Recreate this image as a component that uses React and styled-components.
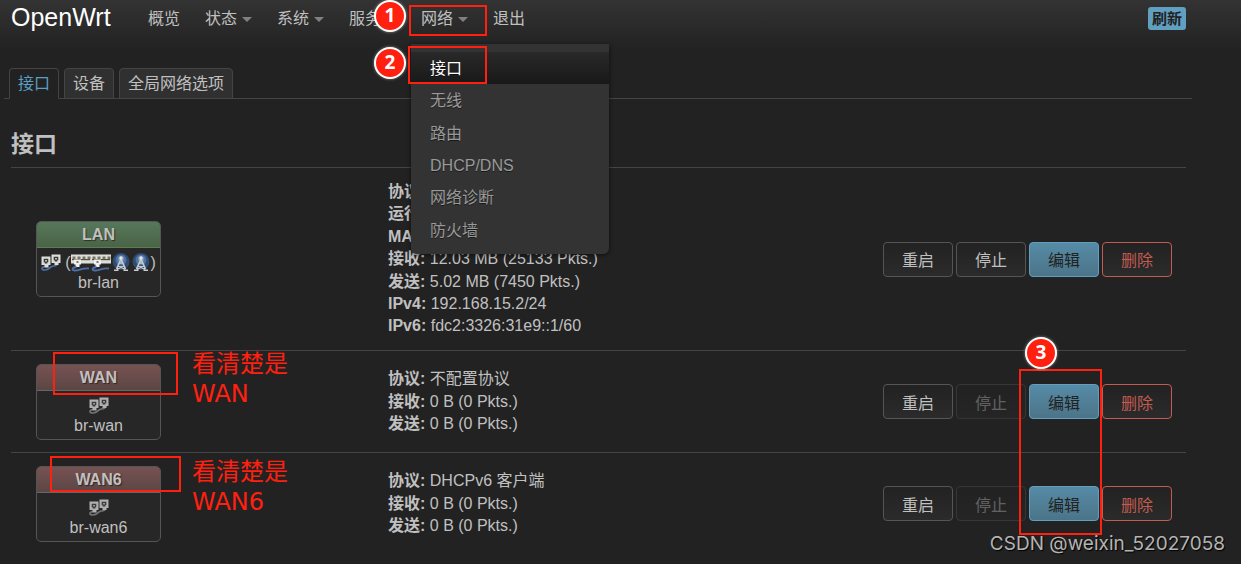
import styled, { createGlobalStyle } from 'styled-components';

const menuItems = ['接口', '无线', '路由', 'DHCP/DNS', '网络诊断', '防火墙'];

const interfaces = [
  {
    name: 'LAN',
    device: 'br-lan',
    up: true,
    details: [
      ['协议', ''],
      ['运行', ''],
      ['MAC', ''],
      ['接收', '12.03 MB (25133 Pkts.)'],
      ['发送', '5.02 MB (7450 Pkts.)'],
      ['IPv4', '192.168.15.2/24'],
      ['IPv6', 'fdc2:3326:31e9::1/60'],
    ],
  },
  {
    name: 'WAN',
    device: 'br-wan',
    details: [
      ['协议', '不配置协议'],
      ['接收', '0 B (0 Pkts.)'],
      ['发送', '0 B (0 Pkts.)'],
    ],
  },
  {
    name: 'WAN6',
    device: 'br-wan6',
    details: [
      ['协议', 'DHCPv6 客户端'],
      ['接收', '0 B (0 Pkts.)'],
      ['发送', '0 B (0 Pkts.)'],
    ],
  },
];

function BridgeIcon({ off }) {
  const plug = off ? '#b0b0b0' : '#deded8';
  const cable = off ? '#747474' : '#4a70a8';
  return (
    <svg width="20" height="20" viewBox="0 0 20 20" aria-hidden="true">
      <path d="M4 13.5C0 14 0 17 4 17C9 17 9 13 12.5 13C15.5 13 16.5 11.5 16.5 9" fill="none" stroke={cable} strokeWidth="1.7" />
      <path d="M.5 3.5h9v8.5h-2v2.5h-4V12h-3z" fill={plug} />
      <path d="M2.7 5.7h4.6v3.6h-1v1.2H3.7V9.3h-1z" fill="#3b3b3b" />
      <path d="M4.2 7h1.6v1.6H4.2z" fill={plug} />
      <path d="M10.5 1.5h9V10h-2v2h-4v-2h-3z" fill={plug} />
      <path d="M12.7 3.7h4.6v3.6h-1v1.2h-2.6V7.3h-1z" fill="#3b3b3b" />
      <path d="M14.2 5h1.6v1.6h-1.6z" fill={plug} />
    </svg>
  );
}

function SwitchIcon() {
  return (
    <svg width="20" height="20" viewBox="0 0 20 20" aria-hidden="true">
      <path d="M0 1.5h20v9H0z" fill="#deded8" />
      <path d="M1.5 3.5h3v3h-3zM6.5 3.5h3v3h-3zM11.5 3.5h3v3h-3zM16.5 3.5h3v3h-3z" fill="#77756a" />
      <path d="M1 6h18v1.2H1z" fill="#55533c" />
      <path d="M3 6.5h7v5H8.5V14h-4v-2.5H3z" fill="#efefeb" />
      <path d="M5.5 8h2v2h-2z" fill="#777" />
      <path d="M5.5 14C1 14.5 0 17.5 4 17.5C9 17.5 10 15 18 15.5" fill="none" stroke="#4a70a8" strokeWidth="1.8" />
    </svg>
  );
}

function WifiIcon() {
  return (
    <svg width="20" height="20" viewBox="0 0 20 20" aria-hidden="true">
      <circle cx="10" cy="8.5" r="8.5" fill="#304a70" />
      <circle cx="10" cy="7" r="5.5" fill="#4f72a5" />
      <circle cx="10" cy="6" r="3" fill="#7895bd" />
      <path d="M10 6L5.5 16M10 6l4.5 10M8.3 10h3.4M7 13l7 3M13 13l-7 3M3 17.3h4.5M12.5 17.3H17" fill="none" stroke="#c9cbce" strokeWidth="1.6" />
      <circle cx="10" cy="5" r="1.7" fill="#e6e6e6" />
    </svg>
  );
}

export default function App() {
  return (
    <Page>
      <GlobalStyle />
      <Header>
        <Brand href="#">OpenWrt</Brand>
        <Nav>
          <NavLink href="#">概览</NavLink>
          <NavLink href="#">状态<Caret /></NavLink>
          <NavLink href="#">系统<Caret /></NavLink>
          <NavLink href="#">服务<Caret /></NavLink>
          <NavGroup>
            <NavLink href="#">网络<Caret /></NavLink>
            <Menu>
              {menuItems.map((item, i) => (
                <MenuLink href="#" key={item} $active={i === 0}>{item}</MenuLink>
              ))}
            </Menu>
          </NavGroup>
          <NavLink href="#">退出</NavLink>
        </Nav>
        <Refresh type="button">刷新</Refresh>
      </Header>
      <Tabs>
        <Tab href="#" $active>接口</Tab>
        <Tab href="#">设备</Tab>
        <Tab href="#">全局网络选项</Tab>
      </Tabs>
      <Main>
        <Title>接口</Title>
        <Table>
          <tbody>
            {interfaces.map((iface) => (
              <Row key={iface.name}>
                <BoxCell>
                  <IfaceBox>
                    <IfaceName $up={iface.up}>{iface.name}</IfaceName>
                    <IfaceBody>
                      <Icons>
                        <BridgeIcon off={!iface.up} />
                        {iface.up && (
                          <>
                            <Paren>(</Paren>
                            <SwitchIcon />
                            <SwitchIcon />
                            <WifiIcon />
                            <WifiIcon />
                            <span>)</span>
                          </>
                        )}
                      </Icons>
                      <span>{iface.device}</span>
                    </IfaceBody>
                  </IfaceBox>
                </BoxCell>
                <Cell>
                  {iface.details.map(([label, value]) => (
                    <Detail key={label}><strong>{label}:</strong> {value}</Detail>
                  ))}
                </Cell>
                <Cell>
                  <Actions>
                    <Button type="button">重启</Button>
                    <Button type="button" disabled={!iface.up}>停止</Button>
                    <Button type="button" $kind="edit">编辑</Button>
                    <Button type="button" $kind="remove">删除</Button>
                  </Actions>
                </Cell>
              </Row>
            ))}
          </tbody>
        </Table>
      </Main>

      <Frame $left={409} $top={5} $width={78} $height={31} />
      <Frame $left={408} $top={46} $width={79} $height={38} />
      <Frame $left={53} $top={352} $width={125} $height={43} />
      <Frame $left={50} $top={456} $width={131} $height={36} />
      <Frame $right={139} $top={369} $width={83} $height={166} />
      <Step $left={374} $top={0}>1</Step>
      <Step $left={374} $top={47}>2</Step>
      <Step $right={184} $top={337}>3</Step>
      <Note $left={192} $top={349}>看清楚是<br />WAN</Note>
      <Note $left={192} $top={457}>看清楚是<br />WAN6</Note>
      <Watermark>CSDN @weixin_52027058</Watermark>
    </Page>
  );
}

const GlobalStyle = createGlobalStyle`
  * {
    box-sizing: border-box;
  }
  body {
    margin: 0;
    background: #222;
    color: #c0c0c0;
    font: 16px/1.4 "Liberation Sans", "Noto Sans CJK SC", sans-serif;
  }
  a {
    color: inherit;
    text-decoration: none;
  }
`;

const Page = styled.div`
  position: relative;
  min-height: 100vh;
  overflow: hidden;
`;

const Header = styled.header`
  display: flex;
  align-items: flex-start;
  height: 50px;
  padding: 0 55px 0 11px;
  background: linear-gradient(#333, #222);
`;

const Brand = styled.a`
  width: 137px;
  color: #fff;
  font-size: 25px;
  line-height: 34px;
`;

const Nav = styled.nav`
  display: flex;
  flex: 1;
  gap: 25px;
`;

const NavLink = styled.a`
  display: flex;
  align-items: center;
  gap: 5px;
  line-height: 38px;
`;

const Caret = styled.span`
  border: 5px solid transparent;
  border-top-color: #808080;
  border-bottom: 0;
`;

const NavGroup = styled.div`
  position: relative;
`;

const Menu = styled.div`
  position: absolute;
  z-index: 1;
  top: 44px;
  left: -10px;
  display: grid;
  grid-auto-rows: 1fr;
  width: 198px;
  height: 210px;
  padding: 8px 0;
  border-radius: 0 0 6px 6px;
  background: #333;
  box-shadow: 0 1px 4px rgba(0, 0, 0, 0.6);
`;

const MenuLink = styled.a`
  padding: 2px 0 0 19px;
  color: ${(p) => (p.$active ? '#fff' : '#999')};
  background: ${(p) => (p.$active ? 'linear-gradient(#292929, #191919)' : 'none')};
  line-height: 30px;
  text-shadow: 0 1px 0 rgba(0, 0, 0, 0.5);
`;

const Refresh = styled.button`
  height: 23px;
  margin-top: 7px;
  padding: 0 4px;
  border: 0;
  border-radius: 3px;
  background: #609fc0;
  color: #222;
  font: bold 15px/23px "Liberation Sans", "Noto Sans CJK SC", sans-serif;
`;

const Tabs = styled.nav`
  display: flex;
  gap: 5px;
  margin: 18px 49px 0 4px;
  padding-left: 5px;
  border-bottom: 1px solid #444;
`;

const Tab = styled.a`
  margin-bottom: -1px;
  padding: 0 8px;
  border: 1px solid #444;
  border-bottom-color: ${(p) => (p.$active ? '#222' : '#444')};
  border-radius: 4px 4px 0 0;
  background: ${(p) => (p.$active ? '#222' : '#303030')};
  color: ${(p) => (p.$active ? '#5b9dc4' : '#c0c0c0')};
  line-height: 29px;
`;

const Main = styled.main`
  padding: 22px 55px 0 11px;
`;

const Title = styled.h2`
  margin: 0;
  border-bottom: 1px solid #444;
  font-size: 23px;
  line-height: 46px;
`;

const Table = styled.table`
  width: 100%;
  border-collapse: collapse;
`;

const Row = styled.tr`
  & + & {
    border-top: 1px solid #444;
  }
`;

const Cell = styled.td`
  padding: 13px 14px 12px 0;
  vertical-align: middle;
`;

const BoxCell = styled(Cell)`
  width: 377px;
  padding-left: 25px;
`;

const IfaceBox = styled.div`
  width: 125px;
  border: 1px solid #555;
  border-radius: 5px;
  background: #272727;
  text-align: center;
  overflow: hidden;
`;

const IfaceName = styled.div`
  border-bottom: 1px solid ${(p) => (p.$up ? '#55804f' : '#666')};
  background: ${(p) => (p.$up ? 'linear-gradient(#56785a, #4b6347)' : 'linear-gradient(#775252, #5b4644)')};
  font-weight: bold;
  line-height: 25px;
  text-shadow: 1px 1px 1px rgba(0, 0, 0, 0.5);
`;

const IfaceBody = styled.div`
  padding: 5px 4px 3px;
  line-height: 20px;
`;

const Icons = styled.div`
  display: flex;
  justify-content: center;
`;

const Paren = styled.span`
  margin-left: 4px;
`;

const Detail = styled.div`
  white-space: nowrap;
`;

const Actions = styled.div`
  display: flex;
  justify-content: flex-end;
  gap: 3px;
`;

const buttonColors = {
  edit: { border: '#609fc0', text: '#222', fill: 'linear-gradient(#568ba6, #4b7488)' },
  remove: { border: '#c25b50', text: '#c25b50', fill: 'linear-gradient(#222, #2b2b2b)' },
  plain: { border: '#555', text: '#c0c0c0', fill: 'linear-gradient(#222, #2b2b2b)' },
};

const Button = styled.button`
  width: 70px;
  height: 35px;
  padding: 0;
  border: 1px solid ${(p) => buttonColors[p.$kind || 'plain'].border};
  border-radius: 4px;
  background: ${(p) => buttonColors[p.$kind || 'plain'].fill};
  color: ${(p) => buttonColors[p.$kind || 'plain'].text};
  font: 16px "Liberation Sans", "Noto Sans CJK SC", sans-serif;

  &:disabled {
    opacity: 0.4;
  }
`;

// red marks drawn over the page
const Mark = styled.div`
  position: absolute;
  z-index: 2;
  top: ${(p) => p.$top}px;
  ${(p) => (p.$right ? `right: ${p.$right}px;` : `left: ${p.$left}px;`)}
`;

const Frame = styled(Mark)`
  width: ${(p) => p.$width}px;
  height: ${(p) => p.$height}px;
  border: 2px solid #ff2010;
  pointer-events: none;
`;

const Step = styled(Mark)`
  width: 32px;
  height: 32px;
  border: 2px solid #fff;
  border-radius: 50%;
  background: #ff2010;
  box-shadow: 0 0 3px rgba(255, 255, 255, 0.5);
  color: #fff;
  font: bold 19px/26px "Open Sans", sans-serif;
  text-align: center;
`;

const Note = styled(Mark)`
  color: #ff2010;
  font: 24px/30px "DejaVu Sans", "Noto Sans CJK SC", sans-serif;
`;

const Watermark = styled.div`
  position: absolute;
  right: 16px;
  bottom: 7px;
  color: #b4b4b4;
  font: 19px/26px Inter, sans-serif;
  text-shadow: 1px 1px 1px #000;
`;
